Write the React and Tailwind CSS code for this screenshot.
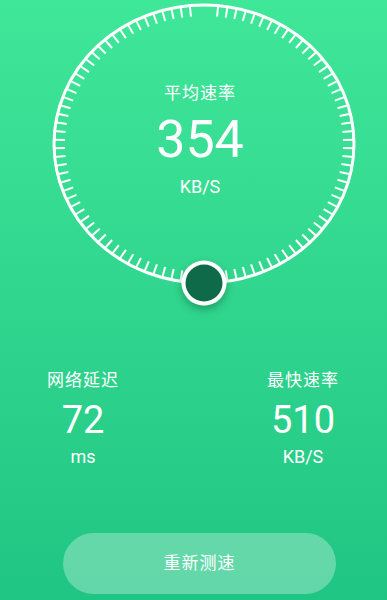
import React from "react";

const CX = 204;
const CY = 144;
const RX = 150;
const RY = 139;

function Dial() {
    const ticks = [];
    const n = 100;
    for (let i = 0; i < n; i++) {
        if (i === 0 || i === n - 1) continue;
        const a = ((i + 0.5) * 2 * Math.PI) / n;
        const s = Math.sin(a);
        const c = -Math.cos(a);
        const x1 = CX + RX * s;
        const y1 = CY + RY * c;
        const x2 = CX + (RX - 11) * s;
        const y2 = CY + (RY - 11) * c;
        ticks.push(
            <line
                key={i}
                x1={x1}
                y1={y1}
                x2={x2}
                y2={y2}
                stroke="white"
                strokeWidth="2"
            />
        );
    }
    return (
        <svg
            className="absolute inset-0"
            width="387"
            height="320"
            viewBox="0 0 387 320"
        >
            <defs>
                <filter id="knobShadow" x="-50%" y="-50%" width="200%" height="200%">
                    <feDropShadow dx="0" dy="4" stdDeviation="4" floodColor="#0a4a30" floodOpacity="0.4" />
                </filter>
            </defs>
            <ellipse cx={CX} cy={CY} rx={RX} ry={RY} fill="none" stroke="white" strokeWidth="3" />
            {ticks}
            <circle cx={CX} cy={CY + RY} r="22.5" fill="white" filter="url(#knobShadow)" />
            <circle cx={CX} cy={CY + RY} r="18.5" fill="#0f6a49" />
        </svg>
    );
}

function Stat({ label, value, unit }) {
    return (
        <div className="flex flex-col items-center">
            <div className="text-[17px] leading-[24px] tracking-[1px]">{label}</div>
            <div className="text-[38px] leading-[44px] mt-[6px]">{value}</div>
            <div className="text-[18px] leading-[24px] mt-[3px]">{unit}</div>
        </div>
    );
}

export default function App() {
    return (
        <div
            className="h-[600px] w-full overflow-hidden flex flex-col text-white bg-linear-to-b from-[#3fe799] to-[#1fc583]"
            style={{ fontFamily: 'Roboto, "Noto Sans CJK SC", sans-serif' }}
        >
            <div className="relative h-[320px] flex flex-col items-center pt-[81px] pl-[13px]">
                <Dial />
                <div className="relative text-[17px] leading-[24px] tracking-[1px]">平均速率</div>
                <div className="relative text-[52px] leading-[60px] mt-[5px]">354</div>
                <div className="relative text-[18px] leading-[24px] mt-[5px]">KB/S</div>
            </div>
            <div className="flex justify-between pl-[47px] pr-[48px] mt-[48px]">
                <Stat label="网络延迟" value="72" unit="ms" />
                <Stat label="最快速率" value="510" unit="KB/S" />
            </div>
            <button className="mt-auto mb-[6px] ml-[63px] w-[273px] h-[61px] rounded-full bg-white/30 text-[17px] tracking-[1px] text-white">
                重新测速
            </button>
        </div>
    );
}
